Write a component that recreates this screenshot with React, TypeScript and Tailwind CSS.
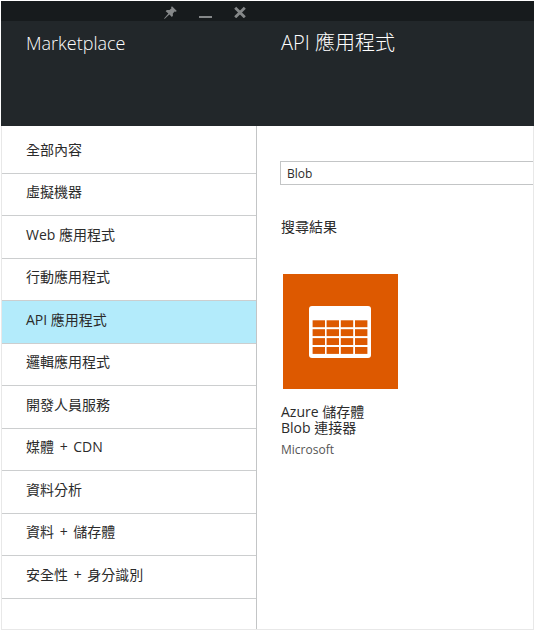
import { Fragment, useState } from "react";

const categories = [
  "全部內容",
  "虛擬機器",
  "Web 應用程式",
  "行動應用程式",
  "API 應用程式",
  "邏輯應用程式",
  "開發人員服務",
  "媒體 + CDN",
  "資料分析",
  "資料 + 儲存體",
  "安全性 + 身分識別",
];

function PinIcon() {
  return (
    <svg viewBox="0 0 14 14" className="h-[13px] w-[13px]" fill="currentColor" aria-hidden="true">
      <path d="M8.6 0.3 13.8 5.4 12.6 6.3 11.4 5.9 9.5 8 9.6 10.6 8.5 11.8 5.8 9.2 1.2 13.4 0 14 0.5 12.8 4.7 8.2 1.8 5.6 3 4.4 5.9 4.4 8.1 2.5 7.6 1.3Z" />
    </svg>
  );
}

function MinimizeIcon() {
  return (
    <svg viewBox="0 0 13 12" className="h-3 w-[13px]" fill="currentColor" aria-hidden="true">
      <path d="M0 10h13v2H0z" />
    </svg>
  );
}

function CloseIcon() {
  return (
    <svg viewBox="0 0 12 12" className="h-3 w-3" fill="none" stroke="currentColor" strokeWidth="2.8" aria-hidden="true">
      <path d="M1.2 1.7 10.8 11.3M10.8 1.7 1.2 11.3" />
    </svg>
  );
}

function TableIcon() {
  return (
    <svg viewBox="0 0 63 52" className="h-[52px] w-[63px]" aria-hidden="true">
      <rect width="62" height="52" rx="3" fill="#fff" />
      <g fill="#dd5900">
        {[14.3, 23.2, 32.1, 41].map((y) =>
          [3.6, 17.6, 31.8, 46].map((x) => (
            <rect key={`${x}-${y}`} x={x} y={y} width="12.4" height="6.9" />
          )),
        )}
      </g>
    </svg>
  );
}

function CategoryName({ name }: { name: string }) {
  const parts = name.split("+");
  return (
    <span>
      {parts.map((part, i) => (
        <Fragment key={part}>
          {i > 0 && <span className="mx-0.5">+</span>}
          {part}
        </Fragment>
      ))}
    </span>
  );
}

export default function App() {
  const [selected, setSelected] = useState("API 應用程式");
  const [query, setQuery] = useState("Blob");

  return (
    <div className="flex min-h-screen flex-col bg-white p-px font-['Open_Sans','Noto_Sans_CJK_TC',sans-serif] text-[#2b2b2b]">
      <header className="bg-[#22272a] text-white">
        <div className="flex h-5 bg-[#171b1d] text-[#858889]">
          <div className="flex w-[245px] items-center justify-end gap-[22px] pt-0.5">
            <button type="button" aria-label="Pin"><PinIcon /></button>
            <button type="button" aria-label="Minimize"><MinimizeIcon /></button>
            <button type="button" aria-label="Close"><CloseIcon /></button>
          </div>
        </div>
        <div className="flex h-[105px] pt-2 leading-7 font-light">
          <h1 className="w-[255px] pl-[25px] text-lg leading-7">Marketplace</h1>
          <h2 className="pl-[25px] text-xl leading-7">API 應用程式</h2>
        </div>
      </header>

      <div className="flex grow border-x border-b border-[#e8e8e8]">
        <nav className="w-[255px] border-r border-[#c3c5c6]">
          <ul className="pt-[5px]">
            {categories.map((name) => (
              <li key={name} className="h-[43px] even:h-[42px]">
                <button
                  type="button"
                  onClick={() => setSelected(name)}
                  className={`flex h-full w-full items-center border-b border-[#cccecf] pb-[5px] pl-6 text-left text-sm ${
                    name === selected ? "bg-[#b3ebfb]" : ""
                  }`}
                >
                  <CategoryName name={name} />
                </button>
              </li>
            ))}
          </ul>
        </nav>

        <main className="grow pt-[35px] pl-[23px]">
          <input
            type="text"
            aria-label="搜尋"
            value={query}
            onChange={(event) => setQuery(event.target.value)}
            className="block h-6 w-full border border-r-0 border-[#c3c5c6] px-1.5 text-xs outline-none"
          />
          <h3 className="mt-8 pl-px text-sm leading-5">搜尋結果</h3>
          <article className="mt-[37px]">
            <div className="ml-[3px] flex h-[115px] w-[115px] items-center justify-center bg-[#dd5900]">
              <TableIcon />
            </div>
            <h4 className="mt-[15px] w-24 pl-px text-sm leading-4">Azure 儲存體 Blob 連接器</h4>
            <p className="mt-1 pl-px text-xs leading-5 text-[#555]">Microsoft</p>
          </article>
        </main>
      </div>
    </div>
  );
}
